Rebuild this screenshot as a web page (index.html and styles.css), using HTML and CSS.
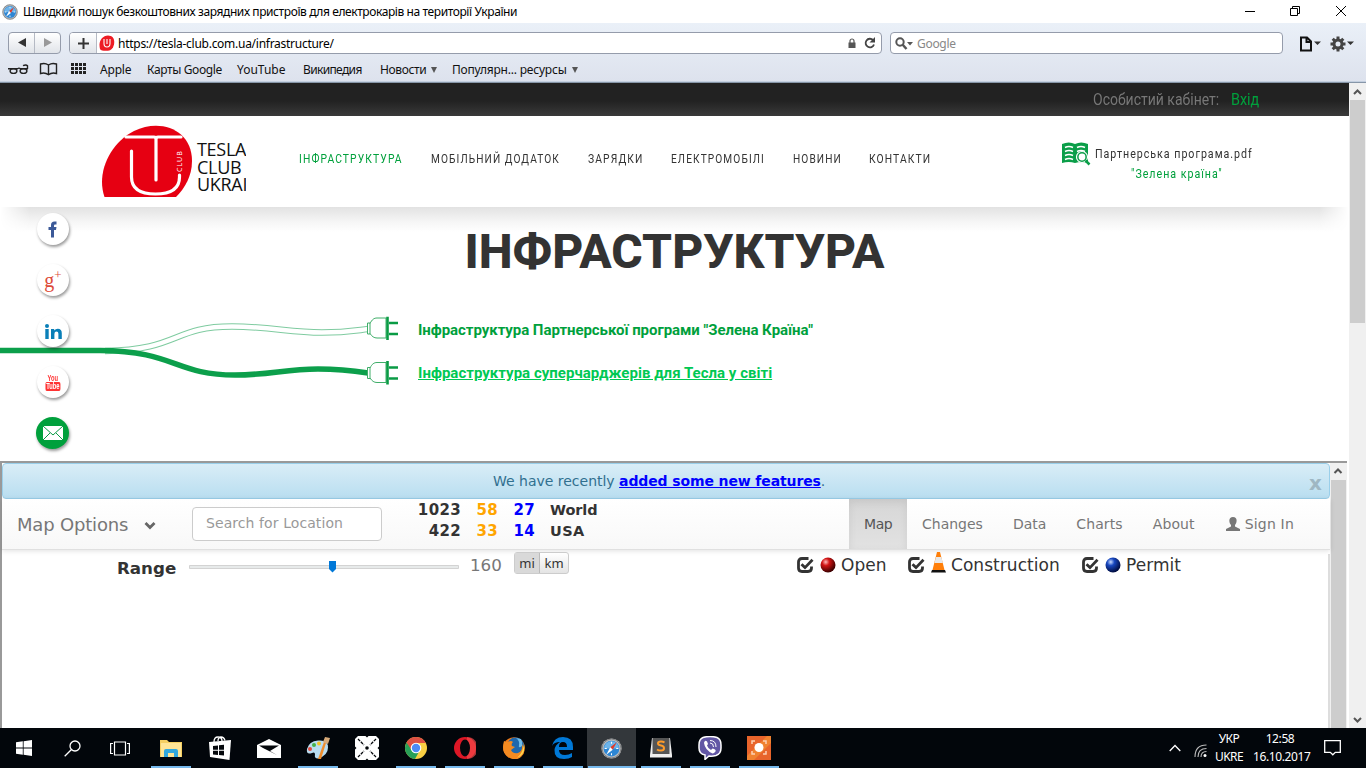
FILE: index.html
```html
<!DOCTYPE html>
<html lang="uk">
<head>
<meta charset="utf-8">
<title>Швидкий пошук безкоштовних зарядних пристроїв</title>
<link rel="stylesheet" href="styles.css">
</head>
<body>
<svg width="0" height="0" class="defs">
  <defs>
    <radialGradient id="redBall" cx=".35" cy=".3" r=".7"><stop offset="0" stop-color="#fbb"/><stop offset=".35" stop-color="#d21414"/><stop offset="1" stop-color="#3c0000"/></radialGradient>
    <radialGradient id="blueBall" cx=".35" cy=".3" r=".7"><stop offset="0" stop-color="#cdf"/><stop offset=".35" stop-color="#1848c0"/><stop offset="1" stop-color="#000c40"/></radialGradient>
    <symbol id="compass" viewBox="0 0 20 20"><circle cx="10" cy="10" r="9.6" fill="#b8bcc0"/><circle cx="10" cy="10" r="9" fill="none" stroke="#777" stroke-width=".8"/><circle cx="10" cy="10" r="7.5" fill="#2d86d4"/><path d="M3 10a7 7 0 0 1 14 0" fill="#6db4ea"/><path d="M10 3.500v2M10 14.500v2M3.500 10h2M14.500 10h2" stroke="#fff"/><path d="M15 4 8.800 8.800l2.400 2.400z" fill="#e03c2c"/><path d="M5 16 8.800 8.800l2.400 2.400z" fill="#fff"/></symbol>
    <symbol id="check" viewBox="0 0 17 16"><path d="M11.500 1.500H5Q1.500 1.500 1.500 5v6Q1.500 14.500 5 14.500h6q3.500 0 3.500-3.500V9.500" fill="none" stroke="#333" stroke-width="2.800"/><path d="M4.500 7.200 8 10.600 15.500 2.800" fill="none" stroke="#333" stroke-width="2.800"/></symbol>
    <symbol id="plug" viewBox="0 0 34 24"><path d="M4 6.500H1.500v11H4zM4 7C6 3 8 1.500 11 1.500h9v20h-9C8 21.500 6 20 4 17" fill="#fff" stroke="#3fae69" stroke-width="1"/><path d="M21.500 0v23.500M23 6.500h9M23 17.500h9" fill="none" stroke="#0a9b45" stroke-width="2.600"/></symbol>
  </defs>
</svg>
<header class="titlebar">
  <svg class="app-ico" width="16" height="16"><use href="#compass"/></svg>
  <span class="win-title">Швидкий пошук безкоштовних зарядних пристроїв для електрокарів на території України</span>
  <svg class="win-btns" width="110" height="22" fill="none" stroke="#000"><path d="M5 10.500h10M50.500 7.500h7v7h-7zM52.500 7.500v-2h7v7h-2M96 5l10 10M106 5 96 15"/></svg>
</header>
<section class="chrome">
  <div class="tools">
    <div class="nav-btns"><span><svg width="12" height="10"><path d="M10 0v9L2 4.500z" fill="#333"/></svg></span><span><svg width="12" height="10"><path d="M2 0v9l8-4.500z" fill="#999"/></svg></span></div>
    <div class="address">
      <span class="plus"><svg width="11" height="11"><path d="M5.500 0v11M0 5.500h11" stroke="#333" stroke-width="2"/></svg></span>
      <svg class="favicon" width="16" height="16"><path d="M1 14C-1 6 3 1 9 .5c5 0 7 4 6 9-1 4-3 6-6 6.300-4 .2-7 0-8-1.800z" fill="#ed1c24"/><path d="M5 4v4.500q0 3.500 3 3.500t3-3.500V4M8 4v5" fill="none" stroke="#fff" stroke-width="1.100"/></svg>
      <span class="url">https://tesla-club.com.ua/infrastructure/</span>
      <svg class="lock" width="8" height="10"><path d="M.5 4.500h7V10h-7z" fill="#555"/><path d="M2 5V3a2 2 0 0 1 4 0v2" fill="none" stroke="#555" stroke-width="1.200"/></svg>
      <svg class="reload" width="12" height="12"><path d="M9 3A4.300 4.300 0 1 0 10 7.500" fill="none" stroke="#444" stroke-width="1.800"/><path d="M11 0v5.500H5.500z" fill="#444"/></svg>
    </div>
    <div class="search"><svg width="18" height="13"><circle cx="5" cy="5" r="3.700" fill="none" stroke="#555" stroke-width="2"/><path d="m7.500 7.500 4 4.500" stroke="#555" stroke-width="2.500"/><path d="M12 5h6l-3 3.500z" fill="#555"/></svg><span>Google</span></div>
    <svg class="menus" width="56" height="16"><path d="M2 1.500h6l4 4v9H2zM7.500 2v4H12" fill="none" stroke="#111" stroke-width="2"/><path d="M15 5.500h7l-3.500 3.500zM48 5.500h7L51.500 9z" fill="#333"/><circle cx="39" cy="8" r="4" fill="none" stroke="#444" stroke-width="3"/><path d="M39 .5v3M39 12.500v3M31.500 8h3M43.500 8h3M33.700 2.700l2 2M42.300 11.300l2 2M44.300 2.700l-2 2M35.700 11.300l-2 2" stroke="#444" stroke-width="3"/></svg>
  </div>
  <nav class="bookmarks">
    <svg width="100" height="16" fill="none" stroke="#222" stroke-width="1.400"><path d="M8 7.700h9.500q1.500-1.200 3 0H28M23 4.700q3-1.500 4.500 0V8"/><ellipse cx="13.500" cy="10" rx="3.400" ry="2.400"/><ellipse cx="23.500" cy="10" rx="3.400" ry="2.400"/><path d="M48.500 4Q45 1.500 40.500 3v9.500q4.500-1.500 8 1.200Q52 11 56.500 12.500V3Q52 1.500 48.500 4zV13"/><path d="M71 3.500h15M71 7.500h15M71 11.500h15" stroke-width="3" stroke-dasharray="3 1"/></svg>
    <span class="b1">Apple</span><span class="b2">Карты Google</span><span class="b3">YouTube</span><span class="b4">Википедия</span><span class="b5">Новости<i></i></span><span class="b6">Популярн... ресурсы<i></i></span>
  </nav>
</section>
<div class="viewport">
<main class="site">
  <div class="account"><span class="acc-label cond">Особистий кабінет:</span><span class="acc-link cond">Вхід</span></div>
  <div class="masthead">
    <div class="brand">
      <svg width="92" height="72"><path d="M3.500 72C-5 48 9 18 33 6 60-7 91 5 91 36c0 15-7 27-16 36z" fill="#e60012"/><path d="M25 12h28q2 0 2 2v41M55 14q0-2 2-2h23M30.500 26v26q0 17 24 17t24-17v-2" fill="none" stroke="#fff" stroke-width="3.200" stroke-linecap="round"/><text class="club-txt" transform="translate(81 47) rotate(-90)">CLUB</text></svg>
      <div class="brand-name">TESLA<br>CLUB<br>UKRAI</div>
    </div>
    <nav class="site-nav"><span class="n1"><b>ІНФРАСТРУКТУРА</b></span><span class="n2"><b>МОБІЛЬНИЙ ДОДАТОК</b></span><span class="n3"><b>ЗАРЯДКИ</b></span><span class="n4"><b>ЕЛЕКТРОМОБІЛІ</b></span><span class="n5"><b>НОВИНИ</b></span><span class="n6"><b>КОНТАКТИ</b></span></nav>
    <div class="partner">
      <svg width="29" height="24"><path d="M0 2q7-3 13 0 6-3 13 0v19q-7-2-13 0-6-2-13 0z" fill="#0a9e48"/><path d="M3 5.500q4-2 8 0M3 9.500q4-2 8 0M3 13.500q4-2 8 0M3 17.500q4-2 8 0M15 5.500q4-2 8 0M15 9.500q4-2 8 0" stroke="#fff" stroke-width="1.500" fill="none"/><circle cx="20" cy="15" r="5.500" fill="#0a9e48" stroke="#fff" stroke-width="1.200"/><circle cx="20" cy="15" r="3.400" fill="#fff"/><path d="m23.500 18.500 4 4" stroke="#0a9e48" stroke-width="2.500"/></svg>
      <div class="partner-txt"><span class="p1 cond">Партнерська програма.pdf</span><span class="p2 cond">"Зелена країна"</span></div>
    </div>
  </div>
  <div class="hero">
    <svg class="cables" width="400" height="110" fill="none"><path d="M105 41C180 40 172 16.500 232 16.500 270 16.500 290 22.500 322 22.500 345 22.500 355 20.500 368 19" stroke="#7fcba0" stroke-width="6.500"/><path d="M105 41C180 40 172 16.500 232 16.500 270 16.500 290 22.500 322 22.500 345 22.500 355 20.500 368 19" stroke="#fff" stroke-width="4.500"/><path d="M0 40.500H100C175 41 175 65 235 65 270 65 285 59 318 59 340 59 355 61 368 63" stroke="#0c9f4b" stroke-width="5.500"/><use href="#plug" x="366" y="6.500" width="34" height="24"/><use href="#plug" x="366" y="51" width="34" height="24"/></svg>
    <h1>ІНФРАСТРУКТУРА</h1>
    <div class="links"><a class="l1">Інфраструктура Партнерської програми "Зелена Країна"</a><a class="l2">Інфраструктура суперчарджерів для Тесла у світі</a></div>
    <div class="social">
      <span class="fb"><svg width="10" height="17"><path d="M3 16.500V9H.5V6H3V4Q3 .5 6.500.5H8.500V3.500H7Q6 3.500 6 4.800V6h2.500L8 9H6v7.500z" fill="#3b5998"/></svg></span><span class="gp">g<sup>+</sup></span>
      <span><svg width="17" height="15" fill="#0a7fb8"><circle cx="2" cy="2" r="2"/><path d="M.3 5h3.400v10H.3zM6 5h3.200v1.500Q10.500 4.700 12.800 4.700q4 0 4 4.500V15h-3.400V9.800q0-2.200-1.900-2.200-2.100 0-2.100 2.400v5H6z"/></svg></span>
      <span class="yt"><em>You</em><em class="tube">Tube</em></span>
      <span class="mail"><svg width="20" height="14"><path d="M0 0h20v14H0z" fill="#fff"/><path d="M0 0 10 9 20 0M0 14l7-7M20 14l-7-7" fill="none" stroke="#0a9b45"/></svg></span>
    </div>
  </div>
  <section class="frame">
    <div class="frame-page">
      <div class="alert"><span class="msg">We have recently <a>added some new features</a>.</span><b class="close">x</b></div>
      <div class="navbar">
        <div class="options"><span>Map Options</span><svg width="12" height="8"><path d="m1.500 1 4.500 4.500L10.500 1" fill="none" stroke="#666" stroke-width="2.800"/></svg></div>
        <div class="location">Search for Location</div>
        <div class="stats"><b>1023</b><b class="or">58</b><b class="bl">27</b><b class="area">World</b><b>422</b><b class="or">33</b><b class="bl">14</b><b class="area usa">USA</b></div>
        <div class="tabs"><span class="on">Map</span><span>Changes</span><span>Data</span><span>Charts</span><span>About</span><span><svg width="14" height="14"><path d="M7 0c5 0 4 6 2 8v1.500l5 2.500v2H0v-2l5-2.500V8C3 6 2 0 7 0z" fill="#777"/></svg>Sign In</span></div>
      </div>
      <div class="filters">
        <b class="range">Range</b>
        <svg class="slider" width="271" height="14"><path d="M.5 5.500h269v3H.5z" fill="#e7eaea" stroke="#d3d3d3"/><path d="M140 1h7v8l-3.500 3.500L140 9z" fill="#0078d7"/></svg>
        <span class="val">160</span><div class="units"><span class="sel">mi</span><span>km</span></div>
        <div class="types">
          <span class="t1"><svg width="17" height="16"><use href="#check"/></svg><svg class="ball" width="16" height="16"><circle cx="8" cy="8" r="7.500" fill="url(#redBall)"/></svg>Open</span>
          <span class="t2"><svg width="17" height="16"><use href="#check"/></svg><svg class="cone" width="15" height="21"><path d="M6 0h3l4.500 18h-12z" fill="#ff7f0a"/><path d="m5 5h5.300l1.600 6H3.400z" fill="#e8e8e8"/><path d="M1 18h13l1 2.500H0z" fill="#111"/></svg>Construction</span>
          <span class="t3"><svg width="17" height="16"><use href="#check"/></svg><svg class="ball" width="16" height="16"><circle cx="8" cy="8" r="7.500" fill="url(#blueBall)"/></svg>Permit</span>
        </div>
      </div>
      <div class="map"></div>
    </div>
    <div class="inner-scroll"><svg width="16" height="17"><path d="m4.500 10 3.500-3.500 3.500 3.500" fill="none" stroke="#555" stroke-width="2"/></svg><i></i></div>
  </section>
</main>
<div class="scroll"><svg width="15" height="17"><path d="m4 11 3.500-3.500L11 11" fill="none" stroke="#555" stroke-width="2"/></svg><i></i><svg width="15" height="17"><path d="m4 7 3.500 3.500L11 7" fill="none" stroke="#555" stroke-width="2"/></svg></div>
</div>
<footer class="taskbar">
  <div class="sys">
    <span><svg width="16" height="16" fill="#fff"><path d="M0 2.300 6.800 1.300v6.300H0zM7.600 1.200 16 0v7.600H7.600zM0 8.400h6.800v6.300L0 13.700zM7.600 8.400H16V16l-8.400-1.200z"/></svg></span>
    <span><svg width="17" height="17" fill="none" stroke="#fff" stroke-width="1.300"><circle cx="11" cy="6" r="5"/><path d="M7.500 9.500.7 16.300"/></svg></span>
    <span><svg width="20" height="15" fill="none" stroke="#fff" stroke-width="1.200"><path d="M4.500 1h11v13h-11zM3 2.500H.6v10H3M17 2.500h2.400v10H17"/></svg></span>
  </div>
  <div class="apps">
    <span class="run"><svg width="22" height="19"><path d="M0 1h7l2 2h13v15H0z" fill="#f5cf62"/><path d="M1 4h20v14H1z" fill="#ffe596"/><path d="M4 18v-6q0-2 2-2h10q2 0 2 2v6h-4v-4H8v4z" fill="#32a8dd"/></svg></span>
    <span><svg width="22" height="24"><path d="m0 6 22-2-1.500 20L1 21z" fill="#fff"/><path d="M5 6q0-5 4-5t4 4M9 5q0-4 3-4t4 3.500" fill="none" stroke="#fff" stroke-width="1.300"/><path d="m4 10 5-.5v4.300H4zM10 9.300l5-.5v5h-5zM4 14.800h5V19l-5-.5zM10 14.800h5v4.700l-5-.5z" fill="#05080c"/></svg></span>
    <span><svg width="24" height="19"><path d="m0 6 12-6 12 6v13H0z" fill="#fff"/><path d="M2 6.500h20L13 12l7 4-14-7z" fill="#05080c"/></svg></span>
    <span class="run"><svg width="26" height="24"><path d="M2 13Q4 5 13 4.500q10-1 10 7T13 22.500q-4 0-3-4 0-3-3-1.500-6 2-5-4z" fill="#b9dcf0"/><circle cx="5" cy="13" r="2" fill="#e04b3e"/><circle cx="9" cy="9" r="2" fill="#45b04a"/><circle cx="14" cy="7.500" r="2" fill="#f5c024"/><path d="m13 23 6-17 2 1-5 16z" fill="#ef8d2d"/><path d="m18 6 2-5 5 1-2 6z" fill="#d7aa79"/></svg></span>
    <span><svg width="24" height="24"><path d="M3 0h18l3 3v18l-3 3H3l-3-3V3z" fill="#fff"/><path d="m3 3 6 6M21 3l-6 6M3 21l6-6M21 21l-6-6" stroke="#05080c" stroke-width="1.300" stroke-dasharray="3 1" fill="none"/><path d="M10.500 0h3L12 1.500zM10.500 24h3L12 22.500zM0 10.500v3L1.500 12zM24 10.500v3L22.500 12z" fill="#05080c"/><circle cx="12" cy="12" r="1.800" fill="#05080c"/></svg></span>
    <span class="run"><svg width="22" height="22"><circle cx="11" cy="11" r="11" fill="#f9cf43"/><path d="M11 11 1.500 5.500A11 11 0 0 0 10 22l5-9z" fill="#28a058"/><path d="M11 11V6h9.800A11 11 0 0 0 1.500 5.500L6.500 13z" fill="#dd5144"/><circle cx="11" cy="11" r="5.300" fill="#fff"/><circle cx="11" cy="11" r="4.200" fill="#4c8bf5"/></svg></span>
    <span class="run"><svg width="22" height="22"><circle cx="11" cy="11" r="11" fill="#dd1726"/><path d="M13 0a11 11 0 0 1 0 22z" fill="#f44a4a" opacity=".7"/><ellipse cx="11" cy="11" rx="5" ry="8.500" fill="#05080c"/></svg></span>
    <span class="run"><svg width="22" height="22"><circle cx="11" cy="11" r="10.800" fill="#ef7a1a"/><circle cx="12.500" cy="9" r="8.500" fill="#1f68ad"/><path d="M13 1q4 3 3 7t3 1q1-4-1-7" fill="#70bde8"/><path d="M1 4q2 1 4 1 3-2 5 0-2 2-1 4l3 1-4 3q2 4 7 3 5-2 4-9 5 8-1 13T4 19Q-2 14 1 4z" fill="#f38a21"/><path d="M21 7q2 10-7 14 6-5 7-14z" fill="#ffd84c"/></svg></span>
    <span class="run"><svg width="21" height="22"><path d="M0 9Q2 0 11 0q10 0 10 10v3H7q0 5 6 5 4 0 7-2v4q-3 2-8 2Q2 22 2.500 13 3 8 8 5 2 5 0 9zm7 1h8q0-5-4-5t-4 5z" fill="#0078d7"/></svg></span>
    <span class="run active"><svg width="21" height="21"><use href="#compass"/></svg></span>
    <span class="run"><svg width="22" height="20"><path d="M2 0h18l2 17v2.500H0V17z" fill="#eee"/><path d="M2.500 0h17v16h-17z" fill="#555"/><path d="M14.500 4.500Q13 3.500 11 3.500c-4 0-4 3.500 0 4s4 5 0 5q-2.500 0-4-1" fill="none" stroke="#ff9c2a" stroke-width="2"/></svg></span>
    <span class="run"><svg width="24" height="24"><path d="M5 1.500q7-2 14 0Q23 3 23 9v3q0 6-5 7.500-4 1-7 .5l-4 3.500V19Q1 18 1 12V9Q1 3 5 1.500z" fill="#6257a5" stroke="#fff" stroke-width="1.500"/><path d="M7 5q2-1 3 3l-1 1.500q1 3 4 4.500l1.500-1.500q4 1 3 3-1.500 2-3 2Q7 14 6 7q0-1 1-2z" fill="#fff"/><path d="M12 4.500q6 0 6 6.500M12 7q3.500 0 3.500 4" fill="none" stroke="#fff"/></svg></span>
    <span class="run"><svg width="24" height="24"><path d="M0 0h24v24H0z" fill="#e8642b"/><path d="m0 20 20-20h4v7L7 24H0z" fill="#f08230"/><circle cx="12" cy="11.500" r="4.500" fill="#fff"/><path d="M5 8V5h3M16 5h3v3M19 15v3h-3M8 18H5v-3" fill="none" stroke="#fbd0b4" stroke-width="1.500"/></svg></span>
  </div>
  <div class="tray">
    <svg class="up" width="12" height="8"><path d="m.7 7 5.300-5.500L11.300 7" fill="none" stroke="#fff" stroke-width="1.300"/></svg>
    <svg class="wifi" width="13" height="13" fill="none" stroke="#bbb" stroke-width="1.100"><path d="M1 13Q1 1 12.500 1M4 13q0-8.500 8.500-8.500M7 13q0-5.500 5.500-5.500"/><circle cx="11" cy="11.500" r="1.500" fill="#fff" stroke="none"/></svg>
    <div class="lang"><span>УКР</span><span>UKRE</span></div>
    <div class="clock"><span>12:58</span><span>16.10.2017</span></div>
    <svg class="note" width="17" height="16"><path d="M.7.7h15.600v11.600h-5l-2.500 2.500-2.500-2.500H.7z" fill="none" stroke="#fff" stroke-width="1.300"/></svg>
  </div>
</footer>
</body>
</html>
```

FILE: styles.css
```css
* { box-sizing: border-box; }
body { margin: 0; width: 1366px; height: 768px; overflow: hidden; background: #fff; font-family: "Noto Sans", sans-serif; display: flex; flex-direction: column; }
svg { display: block; flex: none; }
.defs { position: absolute; }
span, a, b { white-space: nowrap; }
.cond { display: block; transform: scaleX(.875); transform-origin: 0 0; }

.titlebar { height: 23px; flex: none; display: flex; align-items: center; font-size: 12px; color: #000; }
.app-ico { margin: 0 5px 0 2px; }
.win-title { letter-spacing: -.41px; }
.win-btns { margin-left: auto; margin-right: 16px; }

.chrome { height: 60px; flex: none; background: linear-gradient(#eaf0f8, #dde2ed); border-bottom: 1px solid #8796a8; box-shadow: inset 0 -1px #c4d0e0; font-size: 12px; }
.tools { display: flex; padding: 9px 0 0 8px; height: 37px; }
.nav-btns { width: 53px; height: 22px; border: 1px solid #959cab; border-radius: 4px; display: flex; background: linear-gradient(#fff, #e1e4e9); margin-right: 8px; }
.nav-btns span { flex: 1; display: flex; align-items: center; justify-content: center; }
.nav-btns span + span { border-left: 1px solid #b5bac4; }
.address { width: 813px; height: 22px; border: 1px solid #959cab; border-radius: 4px; display: flex; align-items: center; background: #fff; margin-right: 8px; overflow: hidden; }
.plus { width: 27px; height: 20px; display: flex; align-items: center; justify-content: center; background: linear-gradient(#fff, #e1e4e9); border-right: 1px solid #b5bac4; margin-right: 2px; }
.favicon { margin-right: 3px; }
.url { letter-spacing: -.27px; }
.lock { margin-left: auto; margin-right: 8px; }
.reload { margin-right: 5px; }
.search { width: 393px; height: 22px; border: 1px solid #959cab; border-radius: 4px; display: flex; align-items: center; background: #fff; color: #888; padding-left: 4px; gap: 4px; letter-spacing: -.3px; }
.menus { margin: 4px 0 0 16px; }
.bookmarks { display: flex; height: 18px; align-items: center; color: #111; }
.bookmarks i { display: inline-block; border: 3.5px solid transparent; border-top: 6px solid #555; border-bottom: 0; margin-left: 5px; vertical-align: 1px; }
.b1 { width: 47px; letter-spacing: -.2px; }
.b2 { width: 90px; letter-spacing: -.38px; }
.b3 { width: 66px; }
.b4 { width: 77px; letter-spacing: -.65px; }
.b5 { width: 72px; letter-spacing: -.35px; }
.b6 { letter-spacing: -.2px; }

.viewport { display: flex; height: 645px; flex: none; }
.site { width: 1349px; display: flex; flex-direction: column; overflow: hidden; }
.scroll { width: 17px; background: #f0f0f0; padding-left: 1px; display: flex; flex-direction: column; }
.scroll i { width: 15px; height: 223px; background: #cdcdcd; margin-bottom: auto; }
.account { height: 33px; flex: none; background: linear-gradient(#222 55%, #3a3a3a); display: flex; align-items: center; padding-left: 1093px; font: 16px Roboto, sans-serif; color: #777; }
.acc-label { width: 138px; }
.acc-link { color: #00a03c; transform: scaleX(.9); }
.masthead { height: 91px; flex: none; display: flex; position: relative; background: #fff; }
.masthead::after { content: ""; position: absolute; left: 0; right: 0; top: 91px; height: 25px; background: linear-gradient(#e2e2e2, #f6f6f6 60%, #fff); mask-image: linear-gradient(90deg, transparent, #000 30px, #000 1319px, transparent); }
.brand { width: 145px; height: 72px; margin: 9px 0 0 101px; display: flex; overflow: hidden; }
.club-txt { font: 7px "Open Sans", sans-serif; fill: #fff; letter-spacing: 1px; }
.brand-name { font: 18px/17.500px "Open Sans", sans-serif; color: #111; padding: 16px 0 0 4px; letter-spacing: -.3px; }
.site-nav { display: flex; padding: 34px 0 0 53px; width: 816px; font: 12.500px/18px Roboto, sans-serif; color: #333; }
.site-nav b { font-weight: 400; display: inline-block; letter-spacing: 1.350px; transform: scaleX(.825); transform-origin: 0 0; }
.site-nav .n2 b, .site-nav .n4 b, .site-nav .n5 b { transform: scaleX(.812); }
.n1 { width: 132px; color: #00a03c; }
.n2 { width: 157px; }
.n3 { width: 83px; }
.n4 { width: 122px; }
.n5 { width: 76px; }
.partner { display: flex; font: 13px/20px Roboto, sans-serif; padding-top: 26px; color: #333; }
.partner-txt { padding: 2px 0 0 4px; }
.p1, .p2 { letter-spacing: 1.200px; transform: scaleX(.82); }
.p2 { color: #00a03c; margin-left: 36px; }

.hero { height: 254px; flex: none; position: relative; display: grid; grid-template-columns: 418px 1fr; grid-template-rows: 103px 1fr; }
.hero h1 { grid-column: 1 / 3; grid-row: 1; margin: 0; padding-top: 17px; text-align: center; font: 800 48px/56px Roboto, sans-serif; color: #333; position: relative; }
.cables { grid-column: 1; grid-row: 2; }
.links { grid-column: 2; grid-row: 2; display: flex; flex-direction: column; gap: 19px; padding-top: 8px; font: bold 15px/24px Roboto, sans-serif; }
.l1, .l2 { align-self: flex-start; }
.l1 { color: #00a03c; letter-spacing: -.05px; }
.l2 { color: #00c853; text-decoration: underline; letter-spacing: .02px; }
.social { position: absolute; left: 37px; top: 6px; display: flex; flex-direction: column; gap: 19px; }
.social span { width: 32px; height: 32px; border-radius: 50%; background: #fff; box-shadow: 1px 2px 3px rgba(0,0,0,.4); display: flex; align-items: center; justify-content: center; }
.social .gp { font: 20px "Liberation Serif", serif; color: #dd4b39; }
.gp sup { font-size: 13px; align-self: flex-start; margin-top: 3px; }
.social .yt { flex-direction: column; }
.yt em { font: bold 8.500px/8px "Liberation Sans", sans-serif; color: #f33; transform: scaleX(.68); }
.yt .tube { background: #f33; color: #fff; border-radius: 2px; padding: 0 1px; line-height: 9px; }
.social .mail { background: #00a03c; margin-left: -1px; width: 33px; }

.frame { height: 267px; flex: none; border-top: 2px solid #999; border-left: 2px solid #999; display: flex; width: 1347px; font-family: "DejaVu Sans", sans-serif; }
.frame-page { width: 1328px; display: flex; flex-direction: column; }
.alert { height: 36px; flex: none; border: 1px solid #9acfea; border-radius: 4px; background: linear-gradient(#d9edf7, #b9def0); color: #31708f; font-size: 14px; display: flex; align-items: center; padding: 0 7px 0 490px; }
.alert a { color: #00f; font-weight: bold; text-decoration: underline; letter-spacing: -.12px; }
.msg { letter-spacing: -.01px; }
.close { margin-left: auto; font-size: 20px; color: #9fb7c3; line-height: 30px; padding-top: 3px; }
.navbar { height: 51px; flex: none; background: linear-gradient(#fff, #f8f8f8); box-shadow: 0 1px 5px rgba(0,0,0,.12); border-bottom: 1px solid #e0e0e0; display: flex; color: #777; position: relative; }
.options { width: 190px; padding-left: 15px; font-size: 18px; display: flex; align-items: center; gap: 16px; }
.options span { letter-spacing: -.18px; }
.options svg { margin-top: 3px; }
.location { width: 190px; height: 34px; margin-top: 8px; border: 1px solid #ccc; border-radius: 4px; background: #fff; color: #999; font-size: 14px; line-height: 30px; padding-left: 13px; white-space: nowrap; letter-spacing: .08px; }
.stats { width: 467px; padding: 1px 0 0 23px; display: grid; grid-template-columns: 56px 37px 37px 100px; grid-auto-rows: 21px; font-size: 15px; line-height: 21px; color: #333; text-align: right; letter-spacing: .35px; }
.stats .or { color: orange; }
.stats .bl { color: #00f; }
.stats .area { text-align: left; padding-left: 15px; font-size: 14.500px; letter-spacing: -.1px; }
.stats .usa { letter-spacing: .4px; }
.tabs { display: flex; font-size: 14px; line-height: 50px; letter-spacing: 0; }
.tabs span { padding: 0 15px; display: flex; align-items: center; gap: 5px; }
.tabs span:nth-child(4), .tabs span:nth-child(5) { letter-spacing: .1px; }
.tabs span:last-child { padding-left: 16px; letter-spacing: .2px; }
.tabs .on { background: linear-gradient(#d6d6d6, #e2e2e2); color: #555; box-shadow: inset 0 3px 9px rgba(0,0,0,.08); width: 58px; letter-spacing: -.4px; }
.filters { height: 35px; flex: none; display: flex; font-size: 17px; color: #333; border-right: 2px solid #ddd; margin-top: 4px; margin-bottom: -4px; }
.range { width: 187px; padding: 4px 0 0 115px; font-size: 16.700px; }
.slider { margin-top: 6px; }
.val { width: 54px; padding: 1px 0 0 10px; color: #777; font-size: 16.700px; }
.units { height: 22px; margin-top: -2px; display: flex; border: 1px solid #ccc; border-radius: 3px; background: linear-gradient(#fff, #e4e4e4); font: 13px/20px "Noto Sans", sans-serif; width: 55px; position: relative; }
.units span { flex: 1; text-align: center; }
.units .sel { background: #d9d9d9; border-right: 1px solid #bbb; flex: 0 0 25px; }
.types { display: flex; padding-left: 228px; margin-top: -5px; position: relative; }
.types span { display: flex; align-items: center; height: 32px; letter-spacing: .05px; }
.types span svg { margin-right: 6px; }
.types span .ball { margin-right: 5px; }
.types span .cone { margin: -5px 5px 0 0; }
.t1 { width: 111px; }
.t2 { width: 174px; }
.map { flex: 1; border-right: 2px solid #ddd; }
.inner-scroll { width: 17px; background: #f0f0f0; padding-left: 1px; display: flex; flex-direction: column; }
.inner-scroll svg { margin-left: -1px; }
.inner-scroll i { width: 15px; flex: 1; background: #cdcdcd; }

.taskbar { height: 40px; flex: none; background: #02060b; display: flex; color: #fff; font-size: 12px; }
.sys { display: flex; width: 146px; }
.sys span { width: 48px; display: flex; align-items: center; justify-content: center; }
.apps { display: flex; }
.apps span { width: 49px; height: 40px; display: flex; align-items: center; justify-content: center; }
.apps .run { background: linear-gradient(#76b9ed, #76b9ed) center bottom / 40px 2px no-repeat; }
.apps .active { background: linear-gradient(#76b9ed, #76b9ed) center bottom / 48px 2px no-repeat, #33373b; }
.tray { margin-left: auto; display: flex; align-items: center; width: 197px; }
.wifi { margin: 4px 8px 0 13px; }
.lang, .clock { display: flex; flex-direction: column; text-align: center; line-height: 18px; letter-spacing: -.4px; }
.lang { width: 28px; letter-spacing: -.55px; }
.clock { width: 54px; margin: 0 17px 0 10px; }
```
